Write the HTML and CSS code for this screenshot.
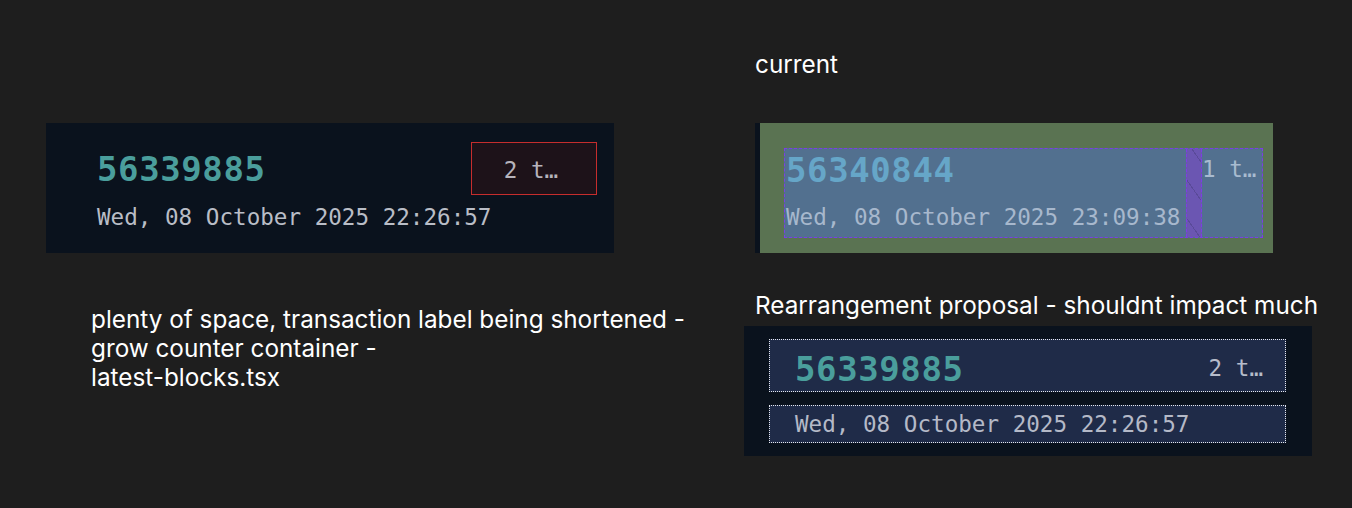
FILE: index.html
```html
<!DOCTYPE html>
<html lang="en">
<head>
<meta charset="utf-8">
<title>Latest blocks layout notes</title>
<link rel="stylesheet" href="styles.css">
</head>
<body>
<main class="canvas">
  <section class="frame frame-before">
    <div class="row">
      <span class="block-num">56339885</span>
      <span class="tx-box">2 t…</span>
    </div>
    <div class="date">Wed, 08 October 2025 22:26:57</div>
  </section>

  <p class="note note-left">plenty of space, transaction label being shortened -<br>grow counter container -<br>latest-blocks.tsx</p>

  <p class="note note-current">current</p>

  <section class="frame frame-current">
    <div class="strip"></div>
    <div class="green">
      <div class="inspect">
        <div class="inspect-main">
          <span class="block-num num-light">56340844</span>
          <span class="date date-light">Wed, 08 October 2025 23:09:38</span>
        </div>
        <div class="hatch"></div>
        <div class="inspect-side"><span class="tx-light">1 t…</span></div>
      </div>
    </div>
  </section>

  <p class="note note-proposal">Rearrangement proposal - shouldnt impact much</p>

  <section class="frame frame-proposal">
    <div class="pbox pbox-top">
      <span class="block-num">56339885</span>
      <span class="tx-plain">2 t…</span>
    </div>
    <div class="pbox pbox-bottom">
      <span class="date date-muted">Wed, 08 October 2025 22:26:57</span>
    </div>
  </section>
</main>
</body>
</html>
```

FILE: styles.css
```css
html, body {
  margin: 0;
  padding: 0;
  background: #1e1e1e;
}

.canvas {
  position: relative;
  width: 1352px;
  height: 508px;
  overflow: hidden;
  font-family: Inter, "Noto Sans", sans-serif;
}

.frame {
  position: absolute;
  box-sizing: border-box;
  background: #0a121d;
  font-family: "DejaVu Sans Mono", "Liberation Mono", monospace;
}

.block-num {
  font-size: 34px;
  font-weight: 600;
  letter-spacing: 0.6px;
  color: #4a9e9c;
  line-height: 1;
  white-space: nowrap;
}

.date {
  font-size: 22.6px;
  color: #b9bdc6;
  line-height: 1;
  white-space: nowrap;
}

/* Frame 1: before */
.frame-before {
  left: 46px;
  top: 123px;
  width: 568px;
  height: 130px;
  padding: 19px 17px 0 51px;
  display: flex;
  flex-direction: column;
}

.frame-before .row {
  display: flex;
  align-items: center;
  justify-content: space-between;
}

.tx-box {
  box-sizing: border-box;
  width: 126px;
  height: 53px;
  border: 1px solid #c62d2d;
  background: #1d1219;
  color: #b6b3bb;
  font-size: 22.6px;
  display: flex;
  align-items: center;
  justify-content: center;
  padding-top: 3px;
  padding-right: 6px;
}

.frame-before .date {
  margin-top: 11px;
}

/* Notes */
.note {
  position: absolute;
  margin: 0;
  color: #ffffff;
  font-size: 24.3px;
  line-height: 29px;
}

.note-left {
  left: 91px;
  top: 305px;
}

.note-current {
  left: 755px;
  top: 50px;
}

.note-proposal {
  left: 755px;
  top: 291px;
}

/* Frame 2: current */
.frame-current {
  left: 755px;
  top: 123px;
  width: 518px;
  height: 130px;
  display: flex;
  background: #0a121d;
}

.strip {
  width: 5px;
  flex: none;
}

.green {
  flex: 1;
  background: #5a7352;
  padding: 26px 11px 16px 25px;
  display: flex;
}

.inspect {
  flex: 1;
  display: flex;
  background: #52708f;
  border: 1px dashed #7d3ce6;
  margin: -1px;
}

.inspect-main {
  flex: 1;
  display: flex;
  flex-direction: column;
  justify-content: space-between;
  padding: 4px 0 8px 1px;
}

.num-light {
  color: #66a6c8;
}

.date-light {
  color: #a7b8cd;
}

.hatch {
  width: 14px;
  flex: none;
  border-left: 1px dashed #7d3ce6;
  border-right: 1px dashed #7d3ce6;
  background: repeating-linear-gradient(55deg, #6b56b2 0 10px, #5a4a99 10px 11px, #6b56b2 11px 22px);
}

.inspect-side {
  width: 60px;
  flex: none;
  padding: 9px 0 0 0;
}

.tx-light {
  font-size: 22.6px;
  color: #a8bbd0;
  white-space: nowrap;
  line-height: 1;
}

/* Frame 3: proposal */
.frame-proposal {
  left: 744px;
  top: 326px;
  width: 568px;
  height: 130px;
  padding: 13px 26px 0 25px;
  display: flex;
  flex-direction: column;
  gap: 13px;
}

.pbox {
  box-sizing: border-box;
  background: #1f2b48;
  border: 1px dotted #e6e8ee;
  display: flex;
  align-items: center;
}

.pbox-top {
  height: 53px;
  justify-content: space-between;
  padding: 6px 22px 0 25px;
}

.pbox-bottom {
  height: 38px;
  padding: 0 0 0 25px;
}

.tx-plain {
  font-size: 22.6px;
  color: #b6bcca;
  line-height: 1;
  white-space: nowrap;
}

.date-muted {
  color: #b4b9c7;
}
```
